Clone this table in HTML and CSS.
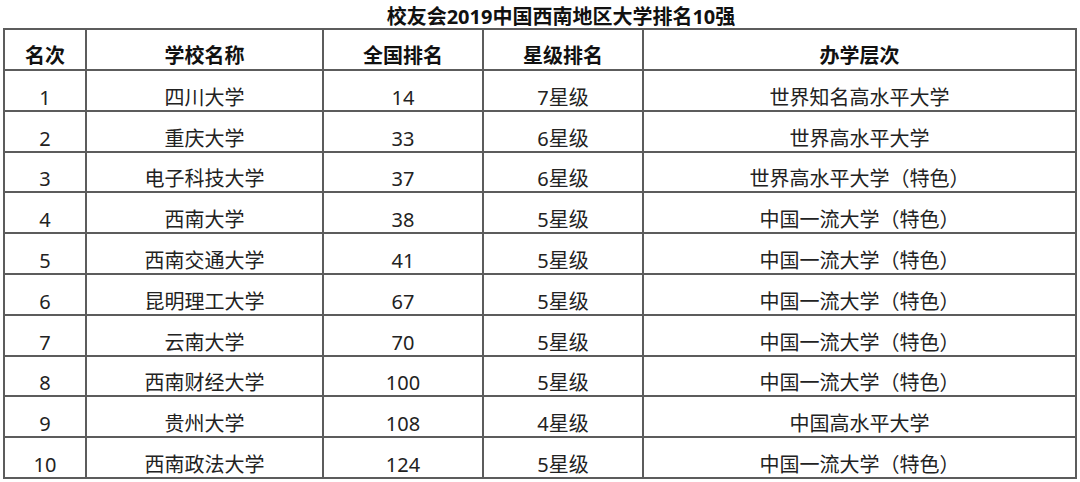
FILE: index.html
```html
<!DOCTYPE html>
<html lang="zh-CN">
<head>
<meta charset="utf-8">
<title>校友会2019中国西南地区大学排名10强</title>
<link rel="stylesheet" href="styles.css">
</head>
<body>
<div class="title">校友会2019中国西南地区大学排名10强</div>
<div class="grid">
  <div class="cell head">名次</div><div class="cell head">学校名称</div><div class="cell head">全国排名</div><div class="cell head">星级排名</div><div class="cell head">办学层次</div>
  <div class="cell">1</div><div class="cell">四川大学</div><div class="cell">14</div><div class="cell">7星级</div><div class="cell">世界知名高水平大学</div>
  <div class="cell">2</div><div class="cell">重庆大学</div><div class="cell">33</div><div class="cell">6星级</div><div class="cell">世界高水平大学</div>
  <div class="cell">3</div><div class="cell">电子科技大学</div><div class="cell">37</div><div class="cell">6星级</div><div class="cell">世界高水平大学（特色）</div>
  <div class="cell">4</div><div class="cell">西南大学</div><div class="cell">38</div><div class="cell">5星级</div><div class="cell">中国一流大学（特色）</div>
  <div class="cell">5</div><div class="cell">西南交通大学</div><div class="cell">41</div><div class="cell">5星级</div><div class="cell">中国一流大学（特色）</div>
  <div class="cell">6</div><div class="cell">昆明理工大学</div><div class="cell">67</div><div class="cell">5星级</div><div class="cell">中国一流大学（特色）</div>
  <div class="cell">7</div><div class="cell">云南大学</div><div class="cell">70</div><div class="cell">5星级</div><div class="cell">中国一流大学（特色）</div>
  <div class="cell">8</div><div class="cell">西南财经大学</div><div class="cell">100</div><div class="cell">5星级</div><div class="cell">中国一流大学（特色）</div>
  <div class="cell">9</div><div class="cell">贵州大学</div><div class="cell">108</div><div class="cell">4星级</div><div class="cell">中国高水平大学</div>
  <div class="cell">10</div><div class="cell">西南政法大学</div><div class="cell">124</div><div class="cell">5星级</div><div class="cell">中国一流大学（特色）</div>
</div>
</body>
</html>
```

FILE: styles.css
```css
html, body {
  margin: 0;
  padding: 0;
  background: #ffffff;
}
body {
  width: 1080px;
  height: 482px;
  overflow: hidden;
  font-family: "Noto Sans", "Noto Sans CJK SC", sans-serif;
  color: #222222;
}
.title {
  height: 28px;
  box-sizing: border-box;
  padding-top: 7px;
  padding-left: 42px;
  font-size: 20px;
  line-height: 20px;
  font-weight: 700;
  color: #111111;
  text-align: center;
  white-space: nowrap;
}
.grid {
  margin-left: 3px;
  width: 1074px;
  box-sizing: border-box;
  display: grid;
  grid-template-columns: 80px 235px 158px 158px 431px;
  grid-template-rows: 39px 39px 39px 38px 39px 39px 39px 39px 38px 39px 39px;
  gap: 2px;
  padding: 2px;
  background: #5c5c5c;
}
.cell {
  background: #ffffff;
  display: flex;
  align-items: flex-end;
  justify-content: center;
  padding-bottom: 2px;
  box-sizing: border-box;
  font-size: 20px;
  line-height: 20px;
  white-space: nowrap;
}
.head {
  font-weight: 700;
  color: #111111;
  padding-bottom: 3px;
}
```
